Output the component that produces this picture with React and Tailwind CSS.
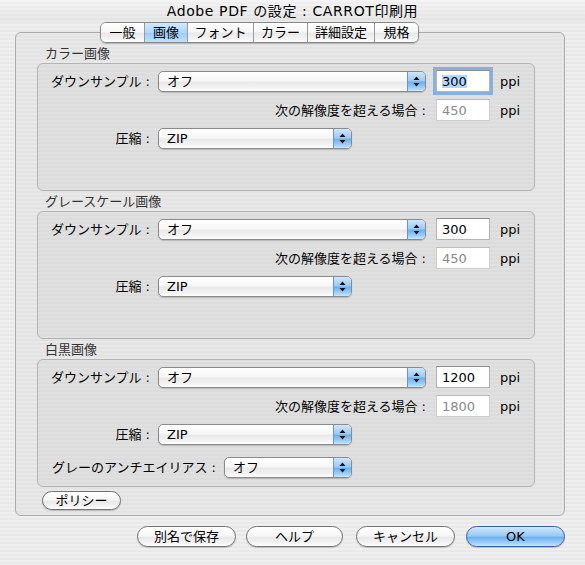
import React from 'react';

const font = "font-['Lucida_Grande','DejaVu_Sans','Noto_Sans_CJK_JP',sans-serif]";
const winBg = "bg-[image:repeating-linear-gradient(180deg,#efefef_0px,#efefef_2px,#e9e9e9_2px,#e9e9e9_4px)]";
const panelBg = "bg-[image:repeating-linear-gradient(180deg,#e8e8e8_0px,#e8e8e8_2px,#e3e3e3_2px,#e3e3e3_4px)]";
const boxBg = "bg-[image:repeating-linear-gradient(180deg,#e0e0e0_0px,#e0e0e0_2px,#dcdcdc_2px,#dcdcdc_4px)]";
const whiteGloss = "bg-[image:linear-gradient(180deg,#ffffff_0%,#f7f7f7_45%,#e9e9e9_55%,#f4f4f4_85%,#ffffff_100%)]";
const blueGloss = "bg-[image:linear-gradient(180deg,#cfe6fd_0%,#9ccbf6_45%,#6eb1f0_55%,#9fd2fc_85%,#c8e8ff_100%)]";

const tabs = [
    {label: '一般', w: 'w-[43px]'},
    {label: '画像', w: 'w-[43px]', active: true},
    {label: 'フォント', w: 'w-[66px]'},
    {label: 'カラー', w: 'w-[54px]'},
    {label: '詳細設定', w: 'w-[67px]'},
    {label: '規格', w: 'w-[44px]'},
];

const Arrows = () => (
    <svg width="7" height="11" viewBox="0 0 7 11">
        <path d="M3.5 0.5 L6.5 4 L0.5 4 Z" fill="#111"/>
        <path d="M3.5 10.5 L6.5 7 L0.5 7 Z" fill="#111"/>
    </svg>
);

const Popup = ({value, width}) => (
    <div className={`flex h-[21px] items-stretch rounded-[5px] border border-[#8a8a8a] shadow-[0_1px_1px_rgba(0,0,0,0.18)] ${whiteGloss} ${width}`}>
        <span className="flex flex-1 items-center pl-[8px] text-[13px] leading-none text-black">{value}</span>
        <span className={`flex w-[18px] items-center justify-center rounded-r-[4px] border-l border-[#6f94c4] ${blueGloss}`}>
            <Arrows/>
        </span>
    </div>
);

const Field = ({value, focused, disabled}) => (
    <div className={`flex h-[22px] w-[54px] items-center border border-[#b4b4b4] border-t-[#8c8c8c] bg-white pl-[5px] text-[13px] leading-none ${disabled ? 'border-[#cfcfcf] border-t-[#bdbdbd] text-[#8a8a8a]' : 'text-black'} ${focused ? 'shadow-[0_0_0_3px_rgba(110,160,220,0.75)]' : ''}`}>
        <span className={focused ? 'bg-[#b5d5fe]' : ''}>{value}</span>
    </div>
);

const Ppi = () => <span className="ml-[10px] text-[13px] leading-none text-black">ppi</span>;

const Button = ({children, width, primary}) => (
    <div className={`flex h-[21px] items-center justify-center rounded-full border text-[13px] leading-none text-black shadow-[0_1px_1px_rgba(0,0,0,0.2)] ${primary ? `border-[#3d5da3] ${blueGloss}` : `border-[#737373] ${whiteGloss}`} ${width}`}>
        {children}
    </div>
);

const Group = ({title, down, max, focused, extra}) => (
    <div>
        <div className="h-[20px] pl-[8px] pt-[3px] text-[13px] leading-[16px] text-[#333]">{title}</div>
        <div className={`h-[128px] rounded-[6px] border border-[#b3b3b3] pt-[6px] ${boxBg}`}>
            <div className="flex h-[22px] items-center">
                <span className="w-[112px] text-right text-[13px] leading-none text-black">ダウンサンプル :</span>
                <span className="ml-[8px]"><Popup value="オフ" width="w-[268px]"/></span>
                <span className="ml-[10px]"><Field value={down} focused={focused}/></span>
                <Ppi/>
            </div>
            <div className="mt-[7px] flex h-[22px] items-center">
                <span className="w-[388px] text-right text-[13px] leading-none text-black">次の解像度を超える場合 :</span>
                <span className="ml-[10px]"><Field value={max} disabled/></span>
                <Ppi/>
            </div>
            <div className="mt-[6px] flex h-[22px] items-center">
                <span className="w-[112px] text-right text-[13px] leading-none text-black">圧縮 :</span>
                <span className="ml-[8px]"><Popup value="ZIP" width="w-[194px]"/></span>
            </div>
            {extra && (
                <div className="mt-[11px] flex h-[22px] items-center">
                    <span className="w-[178px] text-right text-[13px] leading-none text-black">グレーのアンチエイリアス :</span>
                    <span className="ml-[8px]"><Popup value="オフ" width="w-[128px]"/></span>
                </div>
            )}
        </div>
    </div>
);

export default function App() {
    return (
        <div className={`h-[565px] w-[585px] overflow-hidden ${winBg} ${font}`}>
            {/* title bar */}
            <div className="flex h-[22px] items-center justify-center bg-[image:linear-gradient(180deg,rgba(255,255,255,0.35),rgba(0,0,0,0.03))] text-[14px] leading-none tracking-[0.6px] text-black">
                Adobe PDF の設定 : CARROT印刷用
            </div>

            <div className="pl-[15px] pr-[20px]">
                {/* tabs */}
                <div className="relative z-10 ml-[85px] flex h-[21px] w-fit overflow-hidden rounded-[6px] border border-[#888] shadow-[0_1px_1px_rgba(0,0,0,0.2)]">
                    {tabs.map((t, i) => (
                        <div
                            key={t.label}
                            className={`flex items-center justify-center text-[13px] leading-none text-black ${t.w} ${i > 0 ? 'border-l border-[#9a9a9a]' : ''} ${t.active ? 'bg-[image:linear-gradient(180deg,#d3e8fd_0%,#b0d6fa_50%,#9ccbf6_51%,#bfe0fd_100%)]' : whiteGloss}`}
                        >
                            {t.label}
                        </div>
                    ))}
                </div>

                {/* panel */}
                <div className={`-mt-[11px] h-[484px] rounded-[6px] border border-[#ababab] pl-[21px] pr-[29px] pt-[10px] ${panelBg}`}>
                    <Group title="カラー画像" down="300" max="450" focused/>
                    <Group title="グレースケール画像" down="300" max="450"/>
                    <Group title="白黒画像" down="1200" max="1800" extra/>
                    <div className="ml-[5px] mt-[4px]">
                        <div className={`flex h-[19px] w-[79px] items-center justify-center rounded-full border border-[#737373] text-[13px] leading-none text-black shadow-[0_1px_1px_rgba(0,0,0,0.2)] ${whiteGloss}`}>
                            ポリシー
                        </div>
                    </div>
                </div>

                {/* bottom buttons */}
                <div className="mt-[10px] flex justify-end">
                    <Button width="w-[99px]">別名で保存</Button>
                    <span className="ml-[10px]"><Button width="w-[97px]">ヘルプ</Button></span>
                    <span className="ml-[13px]"><Button width="w-[99px]">キャンセル</Button></span>
                    <span className="ml-[11px]"><Button width="w-[99px]" primary>OK</Button></span>
                </div>
            </div>
        </div>
    );
}
